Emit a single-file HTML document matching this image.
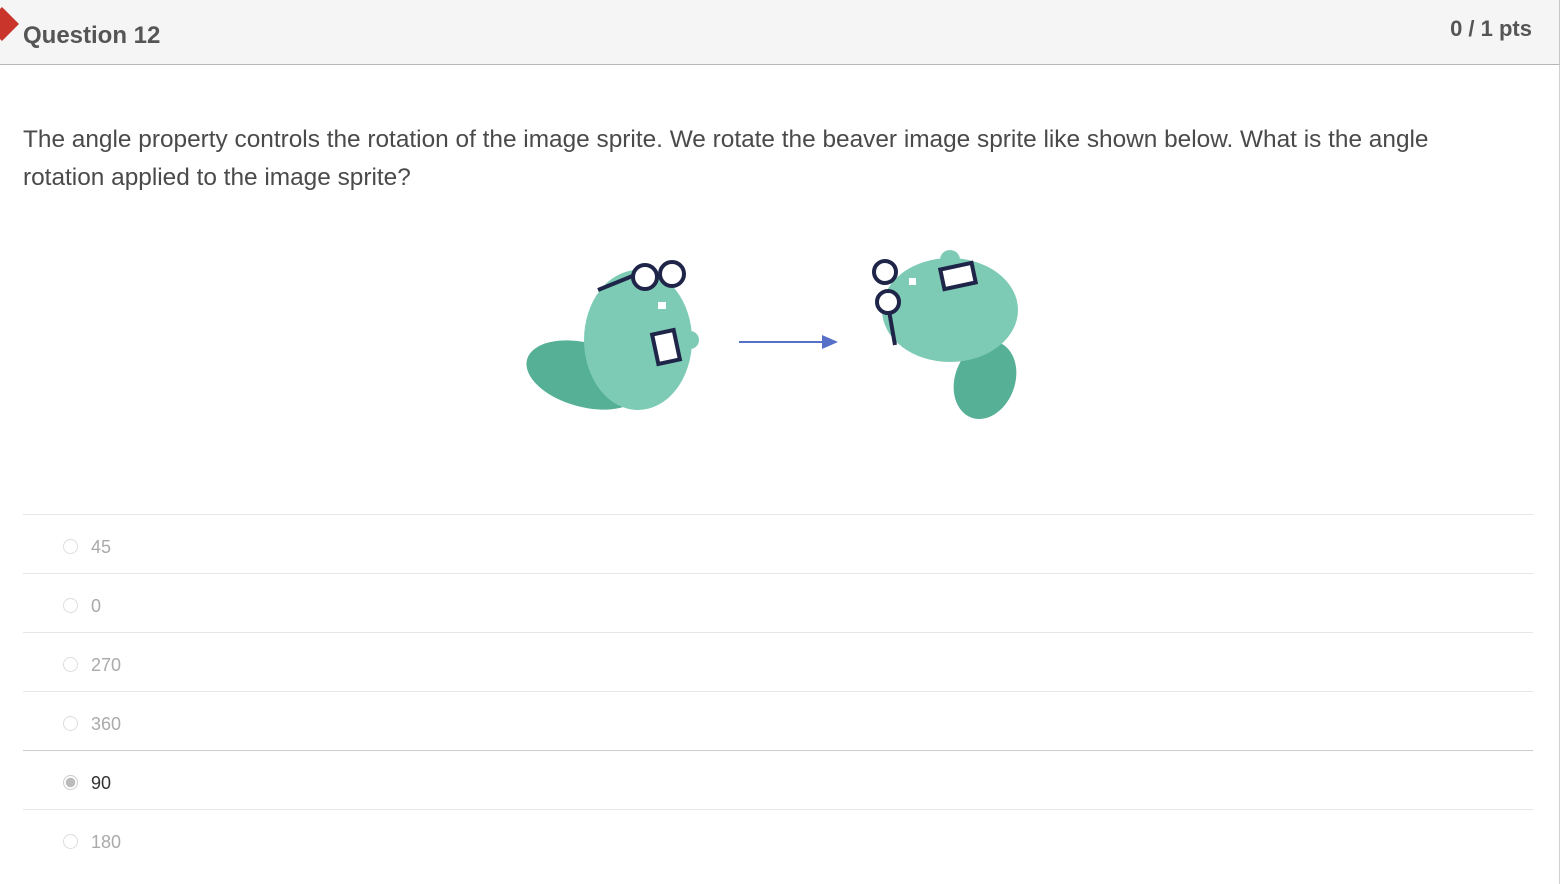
<!DOCTYPE html>
<html><head><style>
body{margin:0;width:1564px;height:884px;background:#fff;font-family:"Liberation Sans",sans-serif;position:relative;overflow:hidden}
.hdr{position:absolute;left:0;top:0;width:1559px;height:64px;background:#f5f5f5;border-bottom:1px solid #b8b8b8;border-right:1px solid #c8c8c8}
.q{position:absolute;left:23px;top:22px;font-size:24px;font-weight:bold;color:#555}
.pts{position:absolute;right:27px;top:16px;font-size:22px;font-weight:bold;color:#555}
.flag{position:absolute;left:-10px;top:12px;width:24px;height:24px;background:#c9352b;transform:rotate(45deg)}
.rb{position:absolute;top:65px;width:1px;height:819px;background:#d0d0d0;left:1559px}
.txt{position:absolute;left:23px;top:121px;width:1450px;font-size:24.4px;line-height:38px;color:#4a4a4a}
.row{position:absolute;left:23px;width:1510px;height:58px;border-top:1px solid #e6e6e6}
.row .r{position:absolute;left:40px;top:24px;width:15px;height:15px;border:1px solid #ddd;border-radius:50%;box-sizing:border-box}
.row span{position:absolute;left:68px;top:22px;font-size:18px;color:#aaa}
</style></head><body>
<div class="hdr"><div class="flag"></div><div class="q">Question 12</div><div class="pts">0 / 1 pts</div></div>
<div class="rb"></div>
<div class="txt">The angle property controls the rotation of the image sprite. We rotate the beaver image sprite like shown below. What is the angle rotation applied to the image sprite?</div>
<svg style="position:absolute;left:510px;top:240px" width="520" height="190">
 <g>
  <ellipse cx="75" cy="135" rx="60" ry="32" fill="#55b096" transform="rotate(15 75 135)"/>
  <ellipse cx="128" cy="100" rx="54" ry="70" fill="#7ecbb5"/>
  <circle cx="180" cy="100" r="9" fill="#7ecbb5"/>
  <path d="M88 50 L125 35" stroke="#1e2548" stroke-width="4"/>
  <circle cx="135" cy="37" r="12" fill="#fff" stroke="#1e2548" stroke-width="4"/>
  <circle cx="162" cy="34" r="12" fill="#fff" stroke="#1e2548" stroke-width="4"/>
  <rect x="145" y="92" width="22" height="30" fill="#fff" stroke="#1e2548" stroke-width="4" transform="rotate(-12 156 107)"/>
  <rect x="148" y="62" width="8" height="7" fill="#fff"/>
 </g>
 <line x1="229" y1="102" x2="315" y2="102" stroke="#5670c8" stroke-width="2"/>
 <polygon points="312,95 328,102 312,109" fill="#5670c8"/>
 <g>
  <ellipse cx="475" cy="140" rx="30" ry="40" fill="#55b096" transform="rotate(20 475 140)"/>
  <ellipse cx="440" cy="70" rx="68" ry="52" fill="#7ecbb5"/>
  <circle cx="440" cy="20" r="10" fill="#7ecbb5"/>
  <path d="M378 65 L385 105" stroke="#1e2548" stroke-width="4"/>
  <circle cx="375" cy="32" r="11" fill="#fff" stroke="#1e2548" stroke-width="4"/>
  <circle cx="378" cy="62" r="11" fill="#fff" stroke="#1e2548" stroke-width="4"/>
  <rect x="432" y="26" width="32" height="20" fill="#fff" stroke="#1e2548" stroke-width="4" transform="rotate(-12 448 36)"/>
  <rect x="399" y="38" width="7" height="7" fill="#fff"/>
 </g>
</svg>
<div class="row" style="top:514px"><div class="r"></div><span>45</span></div>
<div class="row" style="top:573px"><div class="r"></div><span>0</span></div>
<div class="row" style="top:632px"><div class="r"></div><span>270</span></div>
<div class="row" style="top:691px"><div class="r"></div><span>360</span></div>
<div class="row" style="top:750px;border-top-color:#ccc"><div class="r" style="border-color:#ccc;background:radial-gradient(circle,#bbb 0 4.5px,#fff 5px)"></div><span style="color:#333">90</span></div>
<div class="row" style="top:809px"><div class="r"></div><span>180</span></div>
</body></html>
